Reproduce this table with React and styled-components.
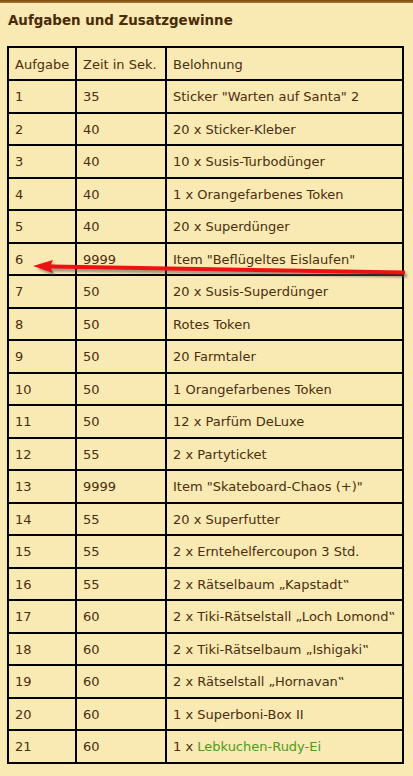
import React from "react";
import styled, { createGlobalStyle } from "styled-components";

const rows = [
  ["1", "35", 'Sticker "Warten auf Santa" 2'],
  ["2", "40", "20 x Sticker-Kleber"],
  ["3", "40", "10 x Susis-Turbodünger"],
  ["4", "40", "1 x Orangefarbenes Token"],
  ["5", "40", "20 x Superdünger"],
  ["6", "9999", 'Item "Beflügeltes Eislaufen"'],
  ["7", "50", "20 x Susis-Superdünger"],
  ["8", "50", "Rotes Token"],
  ["9", "50", "20 Farmtaler"],
  ["10", "50", "1 Orangefarbenes Token"],
  ["11", "50", "12 x Parfüm DeLuxe"],
  ["12", "55", "2 x Partyticket"],
  ["13", "9999", 'Item "Skateboard-Chaos (+)"'],
  ["14", "55", "20 x Superfutter"],
  ["15", "55", "2 x Erntehelfercoupon 3 Std."],
  ["16", "55", "2 x Rätselbaum „Kapstadt‟"],
  ["17", "60", "2 x Tiki-Rätselstall „Loch Lomond‟"],
  ["18", "60", "2 x Tiki-Rätselbaum „Ishigaki‟"],
  ["19", "60", "2 x Rätselstall „Hornavan‟"],
  ["20", "60", "1 x Superboni-Box II"],
];

const GlobalStyle = createGlobalStyle`
  html, body {
    margin: 0;
    padding: 0;
    background: #f9e9b2;
  }
`;

const Page = styled.div`
  position: relative;
  width: 413px;
  height: 776px;
  overflow: hidden;
  background: #f9e9b2;
  font-family: "DejaVu Sans", Verdana, sans-serif;
  color: #4b2e10;
`;

const TopBar = styled.div`
  height: 3px;
  background: linear-gradient(to bottom, #7a4a14, #a8772e);
`;

const Title = styled.h3`
  margin: 0;
  padding: 10px 0 0 8px;
  height: 34px;
  box-sizing: border-box;
  font-size: 13.4px;
  font-weight: bold;
  color: #4a2a08;
`;

const Table = styled.table`
  margin: 9px 0 0 7px;
  width: 397px;
  border-collapse: collapse;
  border: 2px solid #000;
  font-size: 13px;
`;

const Cell = styled.td`
  border: 2px solid #000;
  padding: 1px 0 0 6px;
  height: ${(p) => (p.$head ? 33 : 32.5)}px;
  box-sizing: border-box;
  width: ${(p) => p.$w || "auto"};
  white-space: nowrap;
`;

const Link = styled.span`
  color: #4f9a1c;
`;

const Arrow = styled.svg`
  position: absolute;
  left: 0;
  top: 250px;
  pointer-events: none;
`;

export default function App() {
  return (
    <Page>
      <GlobalStyle />
      <TopBar />
      <Title>Aufgaben und Zusatzgewinne</Title>
      <Table>
        <tbody>
          <tr>
            <Cell $head $w="68px">Aufgabe</Cell>
            <Cell $head $w="90px">Zeit in Sek.</Cell>
            <Cell $head>Belohnung</Cell>
          </tr>
          {rows.map((r) => (
            <tr key={r[0]}>
              <Cell>{r[0]}</Cell>
              <Cell>{r[1]}</Cell>
              <Cell>{r[2]}</Cell>
            </tr>
          ))}
          <tr>
            <Cell>21</Cell>
            <Cell>60</Cell>
            <Cell>
              1 x <Link>Lebkuchen-Rudy-Ei</Link>
            </Cell>
          </tr>
        </tbody>
      </Table>
      <Arrow width="413" height="40" viewBox="0 250 413 40">
        <defs>
          <filter id="sh" x="-5%" y="-50%" width="110%" height="300%">
            <feGaussianBlur stdDeviation="1.2" />
          </filter>
        </defs>
        <g opacity="0.55" filter="url(#sh)" transform="translate(2 3)">
          <polygon points="35,266 53,260 51,264.5 405,270.5 405,274.5 51,268.5 53,273" fill="#555" />
        </g>
        <polygon points="33,266 53,260 51,264.5 405,270.5 405,274.5 51,268.5 53,273" fill="#ee1111" />
      </Arrow>
    </Page>
  );
}
